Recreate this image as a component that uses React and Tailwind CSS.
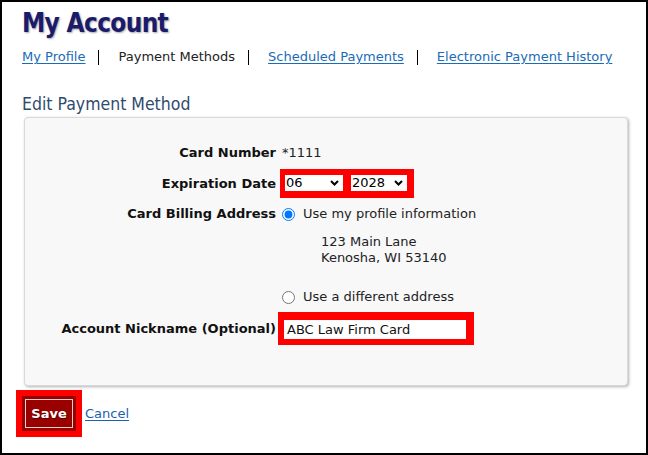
import React from "react";

function Chevron() {
  return (
    <svg width="9" height="6" viewBox="0 0 9 6" className="shrink-0">
      <path d="M1 1 L4.5 4.5 L8 1" fill="none" stroke="#000" strokeWidth="2" />
    </svg>
  );
}

function FakeSelect({ value, width }) {
  return (
    <div
      className="flex h-[16px] items-center justify-between bg-white pl-[1px] pr-[4px] text-[13px] leading-[16px] text-black"
      style={{ width }}
    >
      <span>{value}</span>
      <Chevron />
    </div>
  );
}

export default function App() {
  return (
    <div className="box-border h-[455px] w-[648px] overflow-hidden border-2 border-black bg-white font-['DejaVu_Sans',Verdana,sans-serif] text-[13px] text-[#111]">
      <div className="ml-[20px] mt-[6px] font-['DejaVu_Sans_Condensed','DejaVu_Sans',sans-serif] text-[26px] font-bold leading-[30px] tracking-[-0.7px] text-[#1b1b6b] [text-shadow:1px_1px_2px_rgba(0,0,0,0.35)]">
        My Account
      </div>

      <nav className="ml-[20px] mt-[11px] flex h-[16px] items-center text-[13px] leading-[16px]">
        <a className="text-[#1a6bb8] underline underline-offset-2">My Profile</a>
        <span className="ml-[13px] mr-[19px] h-[15px] w-px bg-black" />
        <span className="text-[#222]">Payment Methods</span>
        <span className="ml-[13px] mr-[19px] h-[15px] w-px bg-black" />
        <a className="text-[#1a6bb8] underline underline-offset-2">Scheduled Payments</a>
        <span className="ml-[13px] mr-[19px] h-[15px] w-px bg-black" />
        <a className="text-[#1a6bb8] underline underline-offset-2">Electronic Payment History</a>
      </nav>

      <h2 className="ml-[20px] mt-[29px] font-['DejaVu_Sans_Condensed','DejaVu_Sans',sans-serif] text-[17.5px] font-normal leading-[20px] text-[#2f4b6e]">
        Edit Payment Method
      </h2>

      <div className="ml-[22px] mt-[3px] box-border w-[604px] rounded-[4px] border border-[#d9d9d9] bg-[#f8f8f8] pb-[40px] pt-[27px] shadow-[1px_1px_3px_rgba(0,0,0,0.3)]">
        {/* Card number */}
        <div className="flex h-[16px] items-center leading-[16px]">
          <div className="w-[251px] text-right font-bold">Card Number</div>
          <div className="ml-[6px] text-[#222]">*1111</div>
        </div>

        {/* Expiration */}
        <div className="mt-[8px] flex items-center">
          <div className="w-[251px] text-right font-bold leading-[16px]">Expiration Date</div>
          <div className="ml-[4px] flex gap-[8px] bg-[#ff0000] pb-[7px] pl-[5px] pr-[7px] pt-[6px]">
            <FakeSelect value="06" width={58} />
            <FakeSelect value="2028" width={56} />
          </div>
        </div>

        {/* Billing address */}
        <div className="mt-[8px] flex items-start leading-[16px]">
          <div className="w-[251px] text-right font-bold">Card Billing Address</div>
          <div className="ml-[6px] flex flex-col">
            <label className="flex h-[16px] items-center">
              <input
                type="radio"
                name="addr"
                defaultChecked
                className="m-0 h-[13px] w-[13px] accent-[#0075ff]"
              />
              <span className="ml-[8px] text-[#222]">Use my profile information</span>
            </label>
            <div className="ml-[39px] mt-[12px] text-[#222]">
              <div>123 Main Lane</div>
              <div>Kenosha, WI 53140</div>
            </div>
            <label className="mt-[23px] flex h-[16px] items-center">
              <input
                type="radio"
                name="addr"
                className="m-0 h-[13px] w-[13px]"
              />
              <span className="ml-[8px] text-[#222]">Use a different address</span>
            </label>
          </div>
        </div>

        {/* Nickname */}
        <div className="mt-[7px] flex items-center">
          <div className="w-[251px] text-right font-bold leading-[16px]">Account Nickname (Optional)</div>
          <div className="ml-[2px] bg-[#ff0000] pb-[6px] pl-[6px] pr-[8px] pt-[8px]">
            <div className="flex h-[19px] w-[182px] items-center bg-white pl-[3px] text-[13px] text-[#111]">
              ABC Law Firm Card
            </div>
          </div>
        </div>
      </div>

      <div className="ml-[14px] mt-[4px] flex items-center">
        <div className="bg-[#ff0000] p-[6px]">
          <div className="box-border flex h-[35px] w-[54px] items-center justify-center bg-[#990000] p-[3px]">
            <div className="flex h-full w-full items-center justify-center border border-[#f3d0d0] pt-px text-[13px] font-bold text-white [text-shadow:1px_1px_1px_rgba(0,0,0,0.5)]">
              Save
            </div>
          </div>
        </div>
        <a className="ml-[3px] mt-px text-[13px] text-[#1a5fb0] underline underline-offset-2">Cancel</a>
      </div>
    </div>
  );
}
